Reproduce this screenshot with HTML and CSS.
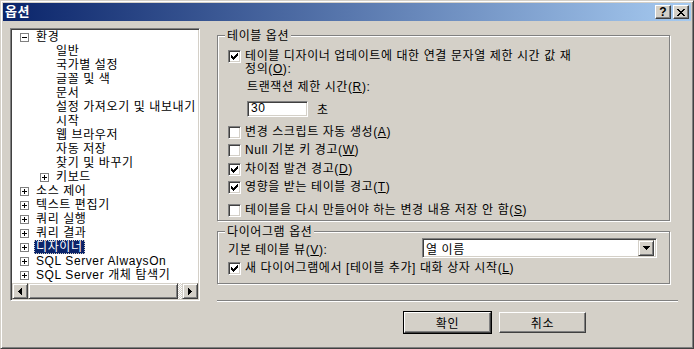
FILE: index.html
```html
<!DOCTYPE html>
<html lang="ko">
<head>
    <meta charset="UTF-8">
    <title>옵션</title>
    <link rel="stylesheet" href="styles.css">
</head>
<body>
<div class="window">
    <div class="titlebar">
        <span class="title">옵션</span>
        <span class="cap-btns">
            <span class="cap-btn">?</span>
            <span class="cap-btn">
                <svg width="8" height="7" viewBox="0 0 8 7"><path d="M0 0h2v1H0zM6 0h2v1H6zM1 1h2v1H1zM5 1h2v1H5zM2 2h4v1H2zM3 3h2v1H3zM2 4h4v1H2zM1 5h2v1H1zM5 5h2v1H5zM0 6h2v1H0zM6 6h2v1H6z" fill="#000"/></svg>
            </span>
        </span>
    </div>
    <div class="main">
        <div class="tree">
            <ul class="tree-list">
                <li class="row"><svg class="tg" width="9" height="9"><rect x=".5" y=".5" width="8" height="8" fill="#fff" stroke="#808080"/><path d="M2 4.5h5" stroke="#000"/></svg><span class="lbl">환경</span></li>
                <li class="row leaf"><span class="lbl">일반</span></li>
                <li class="row leaf"><span class="lbl">국가별 설정</span></li>
                <li class="row leaf"><span class="lbl">글꼴 및 색</span></li>
                <li class="row leaf"><span class="lbl">문서</span></li>
                <li class="row leaf"><span class="lbl">설정 가져오기 및 내보내기</span></li>
                <li class="row leaf"><span class="lbl">시작</span></li>
                <li class="row leaf"><span class="lbl">웹 브라우저</span></li>
                <li class="row leaf"><span class="lbl">자동 저장</span></li>
                <li class="row leaf"><span class="lbl">찾기 및 바꾸기</span></li>
                <li class="row lv1"><svg class="tg" width="9" height="9"><rect x=".5" y=".5" width="8" height="8" fill="#fff" stroke="#808080"/><path d="M2 4.5h5M4.5 2v5" stroke="#000"/></svg><span class="lbl">키보드</span></li>
                <li class="row"><svg class="tg" width="9" height="9"><rect x=".5" y=".5" width="8" height="8" fill="#fff" stroke="#808080"/><path d="M2 4.5h5M4.5 2v5" stroke="#000"/></svg><span class="lbl">소스 제어</span></li>
                <li class="row"><svg class="tg" width="9" height="9"><rect x=".5" y=".5" width="8" height="8" fill="#fff" stroke="#808080"/><path d="M2 4.5h5M4.5 2v5" stroke="#000"/></svg><span class="lbl">텍스트 편집기</span></li>
                <li class="row"><svg class="tg" width="9" height="9"><rect x=".5" y=".5" width="8" height="8" fill="#fff" stroke="#808080"/><path d="M2 4.5h5M4.5 2v5" stroke="#000"/></svg><span class="lbl">쿼리 실행</span></li>
                <li class="row"><svg class="tg" width="9" height="9"><rect x=".5" y=".5" width="8" height="8" fill="#fff" stroke="#808080"/><path d="M2 4.5h5M4.5 2v5" stroke="#000"/></svg><span class="lbl">쿼리 결과</span></li>
                <li class="row"><svg class="tg" width="9" height="9"><rect x=".5" y=".5" width="8" height="8" fill="#fff" stroke="#808080"/><path d="M2 4.5h5M4.5 2v5" stroke="#000"/></svg><span class="lbl sel">디자이너</span></li>
                <li class="row"><svg class="tg" width="9" height="9"><rect x=".5" y=".5" width="8" height="8" fill="#fff" stroke="#808080"/><path d="M2 4.5h5M4.5 2v5" stroke="#000"/></svg><span class="lbl">SQL Server AlwaysOn</span></li>
                <li class="row"><svg class="tg" width="9" height="9"><rect x=".5" y=".5" width="8" height="8" fill="#fff" stroke="#808080"/><path d="M2 4.5h5M4.5 2v5" stroke="#000"/></svg><span class="lbl">SQL Server 개체 탐색기</span></li>
            </ul>
            <div class="hscroll">
                <span class="sb-btn"><svg width="4" height="7"><path d="M3 0h1v7H3zM2 1h1v5H2zM1 2h1v3H1zM0 3h1v1H0z" fill="#000"/></svg></span>
                <span class="sb-thumb"></span>
                <span class="sb-track"></span>
                <span class="sb-btn"><svg width="4" height="7"><path d="M0 0h1v7H0zM1 1h1v5H1zM2 2h1v3H2zM3 3h1v1H3z" fill="#000"/></svg></span>
            </div>
        </div>

        <div class="panel">
            <div class="group g1">
                <span class="group-title">테이블 옵션</span>
                <div class="check multi">
                    <span class="cb on"><svg width="7" height="7"><path d="M6 0h1v3H6zM5 1h1v3H5zM4 2h1v3H4zM3 3h1v3H3zM2 4h1v3H2zM1 3h1v3H1zM0 2h1v3H0z" fill="#000"/></svg></span>
                    <span class="txt">테이블 디자이너 업데이트에 대한 연결 문자열 제한 시간 값 재<br>정의(<u>O</u>):</span>
                </div>
                <div class="sub">트랜잭션 제한 시간(<u>R</u>):</div>
                <div class="timeout">
                    <span class="field">30</span>
                    <span>초</span>
                </div>
                <div class="check r1">
                    <span class="cb"></span>
                    <span class="txt">변경 스크립트 자동 생성(<u>A</u>)</span>
                </div>
                <div class="check r2">
                    <span class="cb"></span>
                    <span class="txt">Null 기본 키 경고(<u>W</u>)</span>
                </div>
                <div class="check r3">
                    <span class="cb on"><svg width="7" height="7"><path d="M6 0h1v3H6zM5 1h1v3H5zM4 2h1v3H4zM3 3h1v3H3zM2 4h1v3H2zM1 3h1v3H1zM0 2h1v3H0z" fill="#000"/></svg></span>
                    <span class="txt">차이점 발견 경고(<u>D</u>)</span>
                </div>
                <div class="check r2">
                    <span class="cb on"><svg width="7" height="7"><path d="M6 0h1v3H6zM5 1h1v3H5zM4 2h1v3H4zM3 3h1v3H3zM2 4h1v3H2zM1 3h1v3H1zM0 2h1v3H0z" fill="#000"/></svg></span>
                    <span class="txt">영향을 받는 테이블 경고(<u>T</u>)</span>
                </div>
                <div class="check r5">
                    <span class="cb"></span>
                    <span class="txt">테이블을 다시 만들어야 하는 변경 내용 저장 안 함(<u>S</u>)</span>
                </div>
            </div>

            <div class="group g2">
                <span class="group-title">다이어그램 옵션</span>
                <div class="combo-row">
                    <span class="combo-lbl">기본 테이블 뷰(<u>V</u>):</span>
                    <span class="combo">
                        <span class="combo-val">열 이름</span>
                        <span class="combo-btn"><svg width="7" height="4"><path d="M0 0h7v1H0zM1 1h5v1H1zM2 2h3v1H2zM3 3h1v1H3z" fill="#000"/></svg></span>
                    </span>
                </div>
                <div class="check r6">
                    <span class="cb on"><svg width="7" height="7"><path d="M6 0h1v3H6zM5 1h1v3H5zM4 2h1v3H4zM3 3h1v3H3zM2 4h1v3H2zM1 3h1v3H1zM0 2h1v3H0z" fill="#000"/></svg></span>
                    <span class="txt">새 다이어그램에서 [테이블 추가] 대화 상자 시작(<u>L</u>)</span>
                </div>
            </div>

            <div class="sep"></div>

            <div class="buttons">
                <span class="btn default"><span class="btn-face">확인</span></span>
                <span class="btn"><span class="btn-face">취소</span></span>
            </div>
        </div>
    </div>
</div>
</body>
</html>
```

FILE: styles.css
```css
*{margin:0; padding:0; list-style:none; box-sizing:border-box;}
body{background:#d4d0c8; font:12px "Liberation Sans","Noto Sans CJK KR",sans-serif; color:#000; letter-spacing:0.6px;}
u{text-decoration:underline; text-underline-offset:1px;}

.window{width:694px; height:349px; display:flex; flex-direction:column; padding:2px;
border:1px solid; border-color:#d4d0c8 #404040 #404040 #d4d0c8;
box-shadow:inset 1px 1px 0 #fff, inset -1px -1px 0 #808080; background:#d4d0c8;}

/* caption */
.titlebar{height:18px; flex:none; display:flex; align-items:center; padding:0 2px;
background:linear-gradient(to right,#0a246a,#a6caf0);}
.title{color:#fff; font-weight:bold; font-size:13px; line-height:18px; flex:1;}
.cap-btns{display:flex; gap:2px;}
.cap-btn{width:16px; height:14px; display:flex; align-items:center; justify-content:center;
background:#d4d0c8; border:1px solid; border-color:#fff #404040 #404040 #fff;
box-shadow:inset -1px -1px 0 #808080; font:bold 12px "Liberation Sans",sans-serif; line-height:12px; letter-spacing:0;}

.main{flex:1; display:flex; padding:7px 0 0 7px;}

/* tree */
.tree{width:190px; height:273px; flex:none; display:flex; flex-direction:column; padding:1px;
background:#fff; border:1px solid; border-color:#808080 #fff #fff #808080;
box-shadow:inset 1px 1px 0 #404040, inset -1px -1px 0 #d4d0c8;}
.tree-list{flex:1; overflow:hidden;}
.row{height:14px; display:flex; align-items:center; white-space:nowrap; padding-left:8px;}
.row.leaf{padding-left:42px;}
.row.lv1{padding-left:28px;}
.tg{flex:none; margin-right:5px; display:block;}
.lbl{padding:0 2px; line-height:14px; height:14px;}
.lbl.sel{background:#0a246a; color:#fff; outline:1px dotted #d4d0c8; outline-offset:-1px;}

.hscroll{height:16px; flex:none; display:flex;}
.sb-btn,.sb-thumb{background:#d4d0c8; border:1px solid; border-color:#d4d0c8 #404040 #404040 #d4d0c8;
box-shadow:inset 1px 1px 0 #fff, inset -1px -1px 0 #808080;}
.sb-btn{width:16px; display:flex; align-items:center; justify-content:center;}
.sb-btn svg{display:block;}
.sb-thumb{width:150px;}
.sb-track{flex:1; background:repeating-conic-gradient(#fff 0 25%,#d4d0c8 0 50%) 0 0/2px 2px;}

/* right side */
.panel{width:461px; margin-left:17px; display:flex; flex-direction:column;}
.group{display:flex; flex-direction:column; align-items:flex-start; margin-right:8px;
border:1px solid #808080; box-shadow:1px 1px 0 #fff, inset 1px 1px 0 #fff; padding:0 12px 0 10px;}
.group-title{margin:-6px 0 0 -3px; padding:0 2px; line-height:12px; background:#d4d0c8; white-space:nowrap;}
.g1{margin-top:7px; height:186px;}
.g2{margin-top:10px; height:53px; align-items:stretch;}
.g2 .group-title{align-self:flex-start;}

.check{display:flex; align-items:center; gap:4px; height:13px; white-space:nowrap;}
.check .txt{line-height:13px;}
.check.multi{align-items:flex-start; height:auto; margin-top:8px;}
.check.multi .txt{line-height:13px;}
.check.r1{margin-top:9px;}
.check.r2{margin-top:5px;}
.check.r3{margin-top:6px;}
.check.r5{margin-top:10px;}
.check.r6{margin-top:4px;}

.cb{width:13px; height:13px; flex:none; display:flex; align-items:center; justify-content:center;
background:#fff; border:1px solid; border-color:#808080 #fff #fff #808080;
box-shadow:inset 1px 1px 0 #404040, inset -1px -1px 0 #d4d0c8;}
.cb svg{display:block;}

.sub{margin:5px 0 0 19px; line-height:12px; white-space:nowrap;}
.timeout{margin:7px 0 0 19px; display:flex; align-items:center; gap:9px;}
.field{width:61px; height:16px; padding-left:3px; line-height:12px; background:#fff;
border:1px solid; border-color:#808080 #fff #fff #808080;
box-shadow:inset 1px 1px 0 #404040, inset -1px -1px 0 #d4d0c8;}

.combo-row{display:flex; align-items:center; height:20px;}
.combo-lbl{width:194px; white-space:nowrap;}
.combo{flex:1; height:20px; display:flex; align-items:center; padding:2px; background:#fff;
border:1px solid; border-color:#808080 #fff #fff #808080;
box-shadow:inset 1px 1px 0 #404040, inset -1px -1px 0 #d4d0c8;}
.combo-val{flex:1; padding-left:1px;}
.combo-btn{width:16px; height:16px; display:flex; align-items:center; justify-content:center;
background:#d4d0c8; border:1px solid; border-color:#d4d0c8 #404040 #404040 #d4d0c8;
box-shadow:inset 1px 1px 0 #fff, inset -1px -1px 0 #808080;}
.combo-btn svg{display:block;}

.sep{margin-top:16px; border-top:1px solid #808080; border-bottom:1px solid #fff;}

.buttons{display:flex; justify-content:flex-end; align-items:center; gap:7px; padding-right:92px; margin-top:9px;}
.btn{display:block;}
.btn.default{border:1px solid #000;}
.btn-face{width:87px; height:21px; display:flex; align-items:center; justify-content:center;
background:#d4d0c8; border:1px solid; border-color:#fff #404040 #404040 #fff;
box-shadow:inset -1px -1px 0 #808080;}
```
